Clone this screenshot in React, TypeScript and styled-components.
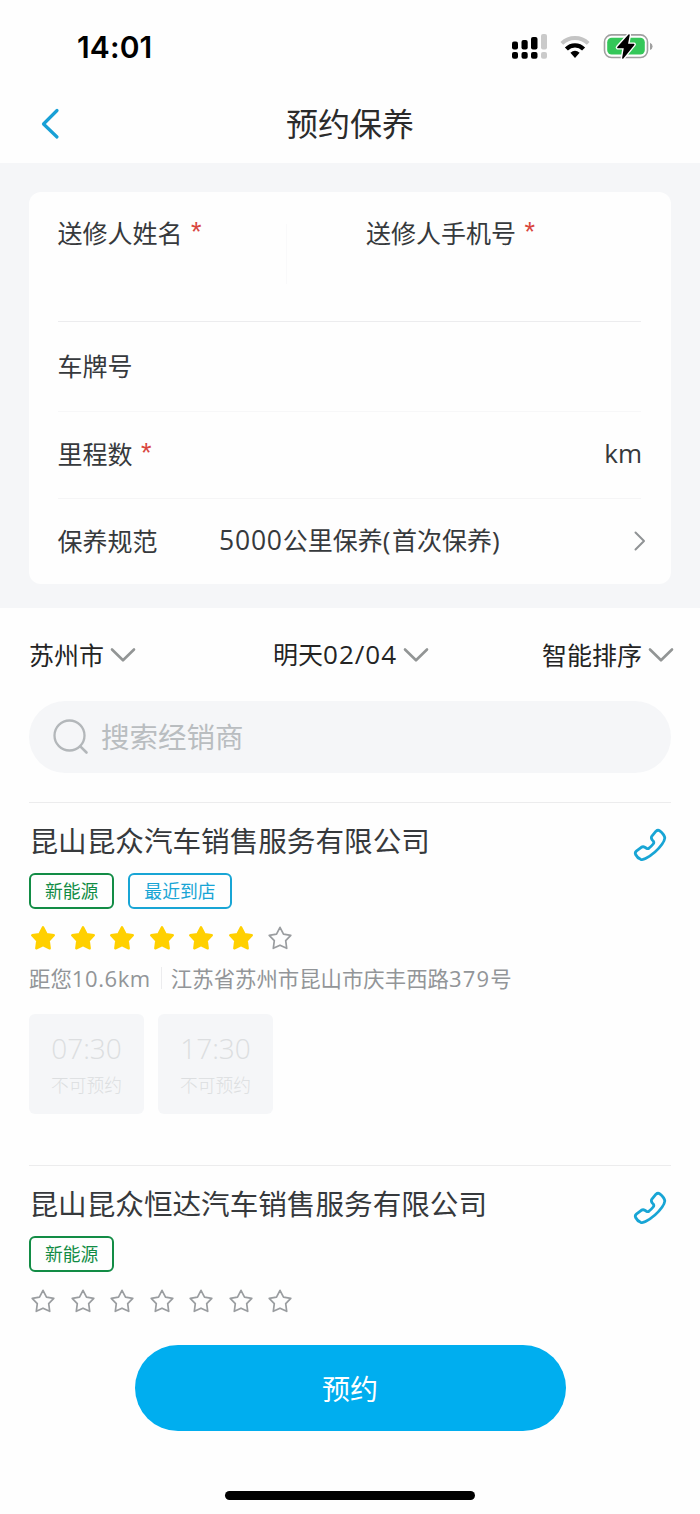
import React from 'react';
import styled, { createGlobalStyle } from 'styled-components';

const GlobalStyle = createGlobalStyle`
  * { box-sizing: border-box; }
  body { margin: 0; background: #fefefe; }
`;

const Page = styled.div`
  width: 700px;
  height: 1514px;
  overflow: hidden;
  display: flex;
  flex-direction: column;
  background: #fefefe;
  color: #36393c;
  font-family: 'Noto Sans CJK SC', sans-serif;
  font-size: 25px;
  line-height: 36px;
  white-space: nowrap;
`;

const StatusBar = styled.div`
  height: 86px;
  padding: 11px 47px 0 77px;
  display: flex;
  justify-content: space-between;
  align-items: flex-start;
  color: #000;
`;

const Clock = styled.div`
  font: 600 30px/72px Inter, sans-serif;
  letter-spacing: 0.15px;
`;

const StatusIcons = styled.div`
  display: flex;
  gap: 13px;
  padding-top: 21px;
`;

const NavBar = styled.header`
  height: 77px;
  padding: 0 40px 4px;
  display: grid;
  grid-template-columns: 30px 1fr 30px;
  align-items: center;
`;

const NavTitle = styled.h1`
  margin: 0;
  padding-bottom: 2px;
  color: #2b2b2b;
  font-size: 32px;
  line-height: 48px;
  font-weight: 400;
  text-align: center;
`;

const FormArea = styled.section`
  height: 445px;
  padding: 29px 29px 24px;
  background: #f5f6f8;
`;

const Card = styled.div`
  height: 392px;
  padding: 0 30px 0 28.5px;
  border-radius: 12px;
  background: #fefefe;
`;

const Row = styled.div<{ $h: number; $line?: string }>`
  height: ${(p) => p.$h}px;
  padding-bottom: 4px;
  display: flex;
  align-items: center;
  border-bottom: ${(p) => (p.$line ? `1px solid ${p.$line}` : 'none')};
`;

const PersonRow = styled(Row)`
  align-items: flex-start;
  padding-top: 22px;
`;

const Field = styled.div<{ $w?: number }>`
  width: ${(p) => (p.$w ? `${p.$w}px` : 'auto')};
  display: flex;
`;

const FieldSeparator = styled.div`
  width: 1px;
  height: 60px;
  margin: 10px 79.5px 0 0;
  background: #f9f9fa;
`;

const Required = styled.span`
  margin-left: 8.5px;
  color: #d9463e;
  font-family: 'Liberation Sans', sans-serif;
  font-size: 27px;
`;

const RowLabel = styled.div`
  width: 161.5px;
`;

const Grow = styled.div`
  flex: 1;
`;

const Unit = styled.span`
  margin-right: -1px;
  font-family: 'Open Sans', sans-serif;
  font-size: 26px;
`;

const RowArrow = styled.div`
  display: flex;
  margin: 3px -5px 0 0;
`;

const Latin = styled.span<{ $size: number; $gap?: number }>`
  font-family: 'Open Sans', sans-serif;
  font-size: ${(p) => p.$size}px;
  letter-spacing: ${(p) => p.$gap ?? 0}px;
`;

const Filters = styled.div`
  height: 93px;
  padding: 0 26px 2px 29px;
  display: grid;
  grid-template-columns: 244px 1fr auto;
  align-items: center;
  color: #242424;
`;

const Filter = styled.div`
  display: flex;
  align-items: center;
  gap: 6px;

  svg {
    margin-top: 3px;
  }
`;

const Search = styled.div`
  height: 72px;
  flex: none;
  margin: 0 29px 29px;
  padding: 0 0 2px 23px;
  display: flex;
  align-items: center;
  gap: 11px;
  border-radius: 36px;
  background: #f5f6f8;
  color: #b9bdc0;
  font-size: 28.5px;

  svg {
    margin-top: 2px;
  }
`;

const Dealer = styled.article<{ $h: number }>`
  height: ${(p) => p.$h}px;
  flex: none;
  margin: 0 29px;
  border-top: 1px solid #ececed;
`;

const DealerHead = styled.div`
  height: 70px;
  padding: 17px 4px 0 0.5px;
  display: flex;
  justify-content: space-between;
`;

const DealerName = styled.h2`
  margin: 0;
  font-size: 28.6px;
  line-height: 40px;
  font-weight: 400;
`;

const CallButton = styled.div`
  padding-top: 8px;
`;

const Tags = styled.div`
  display: flex;
  gap: 14px;
`;

const Tag = styled.span<{ $color: string }>`
  height: 36px;
  padding: 0 14px;
  border: 2px solid ${(p) => p.$color};
  border-radius: 6px;
  color: ${(p) => p.$color};
  font-size: 17.8px;
  line-height: 31px;
`;

const Stars = styled.div`
  margin-top: 15px;
  display: flex;
  gap: 11.5px;
`;

const Meta = styled.div`
  height: 30px;
  margin-top: 11px;
  display: flex;
  align-items: center;
  color: #929598;
  font-size: 21.4px;
  line-height: 30px;
`;

const MetaSeparator = styled.span`
  width: 1px;
  height: 22px;
  margin: 0 9px 0 10px;
  background: #ececee;
`;

const Slots = styled.div`
  margin-top: 21px;
  display: flex;
  gap: 14px;
`;

const Slot = styled.div`
  width: 115px;
  height: 100px;
  padding-top: 14px;
  display: flex;
  flex-direction: column;
  align-items: center;
  border-radius: 6px;
  background: #f5f6f8;
  color: #dcdee0;
`;

const SlotTime = styled.div`
  font: 300 28px/40px 'Open Sans', sans-serif;
`;

const SlotState = styled.div`
  font-size: 17.7px;
  font-weight: 300;
  line-height: 32px;
`;

const Footer = styled.footer`
  display: flex;
  flex-direction: column;
  align-items: center;
`;

const BookButton = styled.button`
  width: 431px;
  height: 86px;
  margin: 0;
  padding: 0;
  border: 0;
  border-radius: 43px;
  background: #00aeef;
  color: #fff;
  font: 400 28px/84px 'Noto Sans CJK SC', sans-serif;
`;

const HomeIndicator = styled.div`
  width: 250px;
  height: 9px;
  margin-top: 60px;
  border-radius: 5px;
  background: #000;
`;

const SignalIcon = () => (
  <svg width="37" height="30" viewBox="0 0 37 30">
    <g fill="#000">
      <rect x="2" y="9.5" width="6" height="8" rx="2" />
      <rect x="11.5" y="8" width="6.2" height="9.5" rx="2" />
      <rect x="21" y="5" width="6.5" height="12.5" rx="2" />
      <rect x="2" y="20" width="6" height="6.8" rx="2" />
      <rect x="11.5" y="20" width="6.2" height="6.8" rx="2" />
      <rect x="21" y="20" width="6.5" height="6.8" rx="2" />
    </g>
    <g fill="#cacaca">
      <rect x="31" y="2" width="6" height="15.5" rx="2" />
      <rect x="31" y="20" width="6" height="6.8" rx="2" />
    </g>
  </svg>
);

const WifiIcon = () => (
  <svg width="30" height="30" viewBox="0 0 30 30">
    <path d="M1.800 11.400A19 19 0 0 1 28.200 11.400" fill="none" stroke="#c4c4c4" strokeWidth="4" />
    <path d="M6.400 17A12 12 0 0 1 23.600 17" fill="none" stroke="#000" strokeWidth="4.200" />
    <path d="M15 26L10.400 20.800Q15 16.800 19.600 20.800Z" />
  </svg>
);

const BatteryIcon = () => (
  <svg width="50" height="30" viewBox="0 0 50 30">
    <rect x="1.500" y="2.900" width="43" height="22.600" rx="7" fill="none" stroke="#a0a0a0" strokeWidth="1.600" />
    <path d="M47 10.700Q49.600 11.900 49.600 14.400T47 18Z" fill="#a0a0a0" />
    <rect x="4.200" y="5.800" width="37.600" height="16.800" rx="4.500" fill="#34c759" />
    <path d="M26 3L14.800 15.500H21.600L19.800 26L30.800 12.500H24.200Z" fill="#fff" stroke="#fff" strokeWidth="4.200" strokeLinejoin="round" />
    <path d="M26 3L14.800 15.500H21.600L19.800 26L30.800 12.500H24.200Z" fill="#000" stroke="#000" strokeWidth="1.400" strokeLinejoin="round" />
  </svg>
);

const BackIcon = () => (
  <svg width="30" height="34" viewBox="0 0 30 34">
    <path d="M17 4.500L3.500 18L17 31" fill="none" stroke="#18a0d6" strokeWidth="3.200" strokeLinecap="round" strokeLinejoin="round" />
  </svg>
);

const ChevronRight = () => (
  <svg width="12" height="20" viewBox="0 0 12 20">
    <path d="M1.500 1.500L10 10L1.500 18.500" fill="none" stroke="#909395" strokeWidth="2" strokeLinecap="round" strokeLinejoin="round" />
  </svg>
);

const ChevronDown = () => (
  <svg width="26" height="16" viewBox="0 0 26 16">
    <path d="M2 2.500L13 13.300L24 2.500" fill="none" stroke="#929595" strokeWidth="2.600" strokeLinecap="round" strokeLinejoin="round" />
  </svg>
);

const SearchIcon = () => (
  <svg width="38" height="38" viewBox="0 0 38 38">
    <circle cx="17.500" cy="17.500" r="15" fill="none" stroke="#b3b7ba" strokeWidth="2.300" />
    <path d="M28.300 28.300L34.500 34.500" stroke="#b3b7ba" strokeWidth="2.600" strokeLinecap="round" />
  </svg>
);

const PhoneIcon = () => (
  <svg width="34" height="34" viewBox="0 0 34 34">
    <path
      d="M23 3.200L18.900 8.200Q17.700 9.800 19.200 11.800L20.400 13.200Q21.300 14.600 20.200 16Q18.300 18.400 16.200 20Q14.800 21 13.400 20.200L11.800 19.200Q10 18.200 8.300 19.300L3.600 22.800Q1.600 24.400 2.600 26.500Q4.400 30 7.600 31.300Q9.800 32 12.500 30.600Q22.500 25.300 29 16.300Q31.600 12.600 31.800 10Q31.400 6.400 26.800 2.800Q24.800 1.400 23 3.200Z"
      fill="none"
      stroke="#18a5d5"
      strokeWidth="2.800"
      strokeLinejoin="round"
    />
  </svg>
);

const Star = ({ filled }: { filled: boolean }) => (
  <svg width="28" height="28" viewBox="0 0 28 28">
    <path
      d="M14 3.300L17.500 10.100L24.800 11.300L19.700 16.700L20.700 24.300L14 21.200L7.300 24.300L8.300 16.700L3.200 11.300L10.500 10.100Z"
      fill={filled ? '#ffd000' : 'none'}
      stroke={filled ? '#ffd000' : '#9a9da0'}
      strokeWidth={filled ? 2.4 : 1.7}
      strokeLinejoin="round"
    />
  </svg>
);

const Rating = ({ value }: { value: number }) => (
  <Stars>
    {Array.from({ length: 7 }, (_, i) => (
      <Star key={i} filled={i < value} />
    ))}
  </Stars>
);

const DealerTitle = ({ children }: { children: React.ReactNode }) => (
  <DealerHead>
    <DealerName>{children}</DealerName>
    <CallButton>
      <PhoneIcon />
    </CallButton>
  </DealerHead>
);

const TimeSlot = ({ time }: { time: string }) => (
  <Slot>
    <SlotTime>{time}</SlotTime>
    <SlotState>不可预约</SlotState>
  </Slot>
);

export default function App() {
  return (
    <>
      <GlobalStyle />
      <Page>
        <StatusBar>
          <Clock>14:01</Clock>
          <StatusIcons>
            <SignalIcon />
            <WifiIcon />
            <BatteryIcon />
          </StatusIcons>
        </StatusBar>
        <NavBar>
          <BackIcon />
          <NavTitle>预约保养</NavTitle>
        </NavBar>

        <FormArea>
          <Card>
            <PersonRow $h={130} $line="#ececee">
              <Field $w={228}>送修人姓名<Required>*</Required></Field>
              <FieldSeparator />
              <Field>送修人手机号<Required>*</Required></Field>
            </PersonRow>
            <Row $h={90} $line="#f7f7f8">车牌号</Row>
            <Row $h={87} $line="#f5f5f6">
              <Field>里程数<Required>*</Required></Field>
              <Grow />
              <Unit>km</Unit>
            </Row>
            <Row $h={85}>
              <RowLabel>保养规范</RowLabel>
              <Grow>
                <Latin $size={26.5} $gap={0.8}>5000</Latin>公里保养<Latin $size={26} $gap={1.4}>(</Latin>首次保养<Latin $size={26} $gap={1}>)</Latin>
              </Grow>
              <RowArrow><ChevronRight /></RowArrow>
            </Row>
          </Card>
        </FormArea>

        <Filters>
          <Filter>苏州市<ChevronDown /></Filter>
          <Filter>
            <span>明天<Latin $size={26} $gap={1}>02/04</Latin></span>
            <ChevronDown />
          </Filter>
          <Filter>智能排序<ChevronDown /></Filter>
        </Filters>
        <Search>
          <SearchIcon />
          搜索经销商
        </Search>

        <Dealer $h={363}>
          <DealerTitle>昆山昆众汽车销售服务有限公司</DealerTitle>
          <Tags>
            <Tag $color="#128c45">新能源</Tag>
            <Tag $color="#18a5d5">最近到店</Tag>
          </Tags>
          <Rating value={6} />
          <Meta>
            <span>距您<Latin $size={22} $gap={0.6}>10.6km</Latin></span>
            <MetaSeparator />
            <span>江苏省苏州市昆山市庆丰西路<Latin $size={22} $gap={1.2}>379</Latin>号</span>
          </Meta>
          <Slots>
            <TimeSlot time="07:30" />
            <TimeSlot time="17:30" />
          </Slots>
        </Dealer>

        <Dealer $h={180}>
          <DealerTitle>昆山昆众恒达汽车销售服务有限公司</DealerTitle>
          <Tags>
            <Tag $color="#128c45">新能源</Tag>
          </Tags>
          <Rating value={0} />
        </Dealer>

        <Footer>
          <BookButton>预约</BookButton>
          <HomeIndicator />
        </Footer>
      </Page>
    </>
  );
}
